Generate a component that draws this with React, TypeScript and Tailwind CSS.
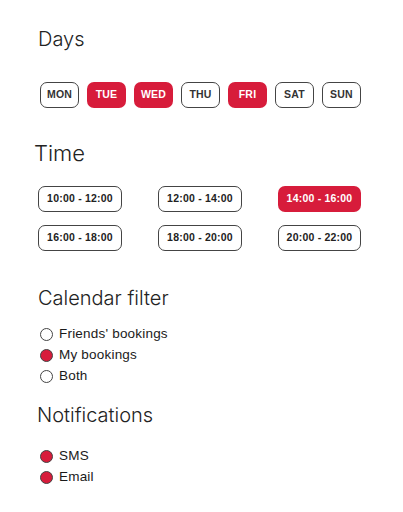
import React, { useState } from 'react';

const days = ['MON', 'TUE', 'WED', 'THU', 'FRI', 'SAT', 'SUN'];
const slots = ['10:00 - 12:00', '12:00 - 14:00', '14:00 - 16:00', '16:00 - 18:00', '18:00 - 20:00', '20:00 - 22:00'];

const Radio: React.FC<{ label: string; on: boolean; onClick: () => void }> = ({ label, on, onClick }) => (
    <button onClick={onClick} className="flex items-center h-[21px] gap-[6px] text-left">
        <span className={`w-[13px] h-[13px] rounded-full border border-[#444] ${on ? 'bg-[#d71c3b]' : 'bg-white'}`} />
        <span className="text-[13.5px] tracking-[0.015em] text-[#1a1a1a]">{label}</span>
    </button>
);

export default function App() {
    const [picked, setPicked] = useState<string[]>(['TUE', 'WED', 'FRI']);
    const [slot, setSlot] = useState('14:00 - 16:00');
    const [filter, setFilter] = useState('My bookings');
    const [notify, setNotify] = useState({ SMS: true, Email: true });

    const toggleDay = (d: string) =>
        setPicked((p) => (p.includes(d) ? p.filter((x) => x !== d) : [...p, d]));

    return (
        <div className="w-[403px] h-[512px] bg-white text-[#222] font-['Liberation_Sans',Arial,sans-serif] pt-[27px]">
            <h2 className="ml-[38px] text-[20px] leading-[24px] font-light font-['Inter',sans-serif]">Days</h2>
            <div className="flex gap-[8px] ml-[40px] mt-[31px]">
                {days.map((d) => {
                    const on = picked.includes(d);
                    return (
                        <button
                            key={d}
                            onClick={() => toggleDay(d)}
                            className={`w-[39px] h-[26px] rounded-[7px] text-[10.5px] tracking-[0.02em] font-bold flex items-center justify-center ${on ? 'bg-[#d71c3b] text-white' : 'border border-[#444] text-[#333]'}`}
                        >
                            {d}
                        </button>
                    );
                })}
            </div>

            <h2 className="ml-[34px] mt-[32px] text-[22px] leading-[26px] font-light font-['Inter',sans-serif]">Time</h2>
            <div className="ml-[38px] mt-[20px] w-[323px] grid grid-cols-[84px_84px_83px] justify-between gap-y-[13px]">
                {slots.map((s) => {
                    const on = slot === s;
                    return (
                        <button
                            key={s}
                            onClick={() => setSlot(s)}
                            className={`h-[26px] rounded-[7px] text-[10.5px] tracking-[0.02em] font-bold flex items-center justify-center ${on ? 'bg-[#d71c3b] text-white' : 'border border-[#444] text-[#222]'}`}
                        >
                            {s}
                        </button>
                    );
                })}
            </div>

            <h2 className="ml-[38px] mt-[35px] text-[20px] leading-[24px] font-light font-['Inter',sans-serif]">Calendar filter</h2>
            <div className="ml-[40px] mt-[14px] flex flex-col">
                {["Friends' bookings", 'My bookings', 'Both'].map((f) => (
                    <Radio key={f} label={f} on={filter === f} onClick={() => setFilter(f)} />
                ))}
            </div>

            <h2 className="ml-[37px] mt-[16px] text-[20px] leading-[24px] font-light font-['Inter',sans-serif]">Notifications</h2>
            <div className="ml-[40px] mt-[19px] flex flex-col">
                {(['SMS', 'Email'] as const).map((n) => (
                    <Radio key={n} label={n} on={notify[n]} onClick={() => setNotify({ ...notify, [n]: !notify[n] })} />
                ))}
            </div>
        </div>
    );
}
